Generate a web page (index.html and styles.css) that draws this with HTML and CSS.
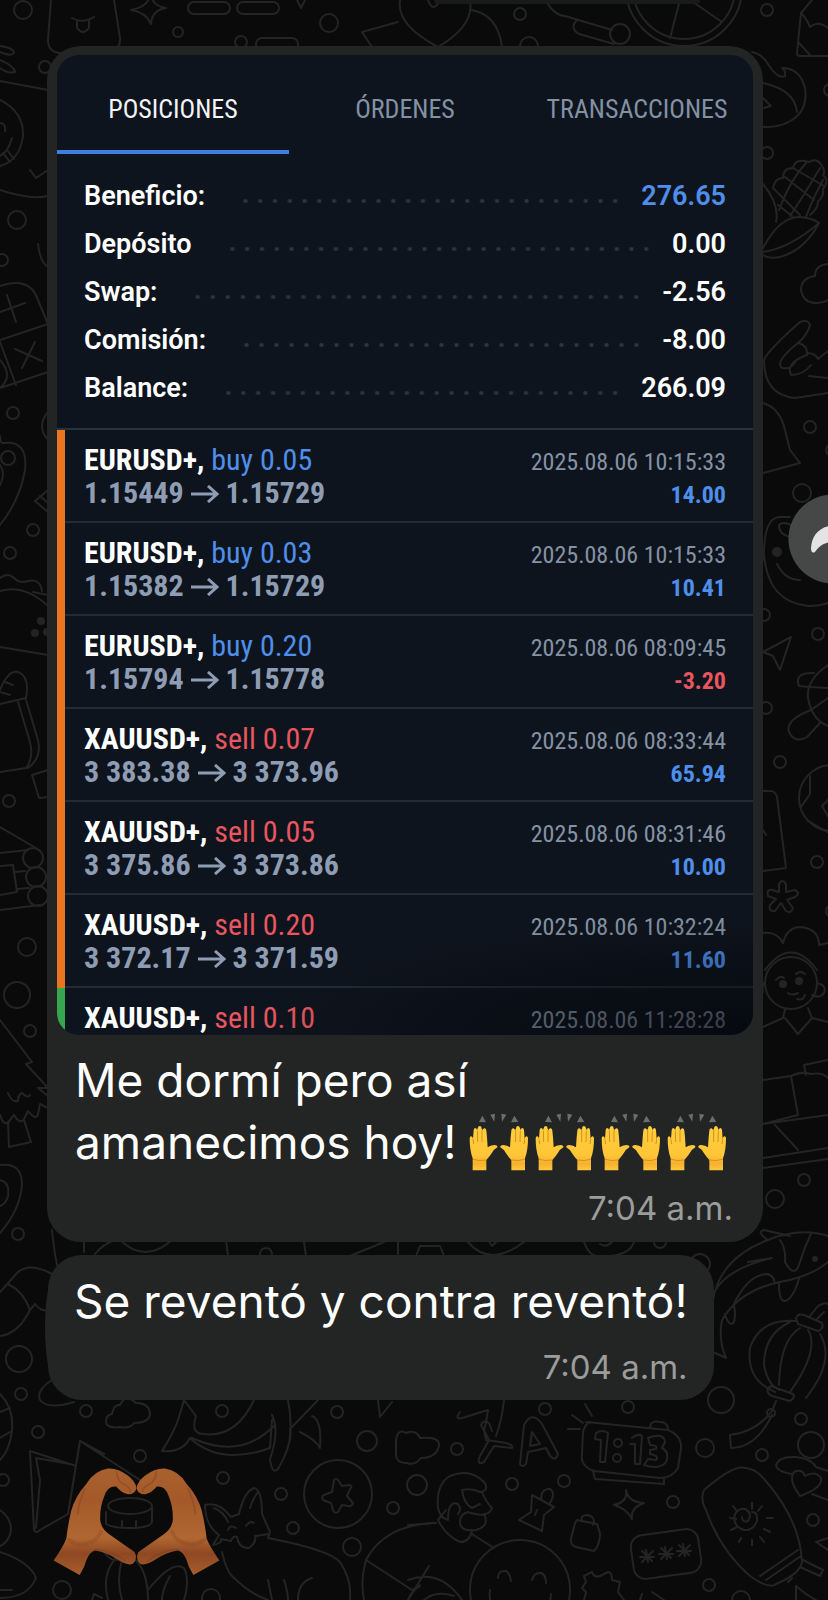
FILE: index.html
```html
<!DOCTYPE html>
<html lang="es">
<head>
<meta charset="utf-8">
<meta name="viewport" content="width=device-width, initial-scale=1">
<title>Chat</title>
<link rel="stylesheet" href="styles.css">
</head>
<body>
<svg class="wallpaper" viewBox="0 0 828 1600" preserveAspectRatio="xMidYMin slice" aria-hidden="true">
  <!-- top edge -->
  <circle cx="23" cy="10" r="9"/><path d="M51 0L48 40Q48 52 60 53H108Q121 50 120 38L114 0M72 18Q82 24 94 17M77 22v6q6 8 12 0v-8"/>
  <path d="M151-6Q152 6 166 8Q152 10 151 24Q146 12 131 10Q148 7 151-6Z"/>
  <rect x="188" y="2" width="42" height="12" rx="6"/><rect x="237" y="2" width="42" height="12" rx="6"/><path d="M297 0l4 8l4-8"/>
  <circle cx="178" cy="32" r="5"/><circle cx="329" cy="23" r="9"/><circle cx="241" cy="42" r="6"/><rect x="256" y="38" width="42" height="14" rx="6"/>
  <path d="M400 0Q396 25 438 47Q475 25 470 0M398 22L362 32L372 47M472 10Q498 15 502 47M428 0q5 14 12 0"/>
  <circle cx="520" cy="14" r="6"/><circle cx="529" cy="46" r="9"/>
  <path d="M545 0Q555 16 565 16L612 30M577 20q-8 8 2 14l35 10"/><circle cx="620" cy="34" r="10"/>
  <circle cx="684" cy="-12" r="58"/><circle cx="684" cy="-12" r="51"/><path d="M680 0L670 38M690 0L722 22"/>
  <circle cx="767" cy="10" r="6"/><path d="M812 0L801 13L797 53q0 3 3 3H828M801 13q6 6 9 14q8-7 18 1M798 42l12 13"/><circle cx="830" cy="90" r="6"/>
  <!-- right edge -->
  <path d="M752 52Q762 54 768 64Q778 80 785 76Q786 70 782 68Q800 68 805 88Q808 110 792 120Q780 128 763 127M763 83Q795 90 797 112M763 98l8 8l-7 2"/>
  <circle cx="767" cy="153" r="6"/>
  <path d="M763 184Q780 205 776 222M763 248Q780 216 800 217Q812 218 819 223Q805 250 780 257Q768 259 763 255M763 252Q790 248 819 223M773 188q2-10 10-10q0-10 10-10q2-10 16-6q8-5 13 4q4 6 1 9q7 6 0 14q1 8-5 12q0 8-8 14M785 177L814 200M793 168L824 186M773 188L800 215M778 205l14 11M806 163Q790 180 779 210M820 168Q804 195 790 216M823 180Q812 200 806 217"/>
  <path d="M828 264q-13 1-13 12q-14 2-14 14q2 13 16 13q6 0 11-3"/>
  <path d="M764 360Q768 350 800 322Q808 319 810 325Q808 334 798 343Q774 362 782 368q10 2 14-8M798 343q10 2 9 12q-22 8-16 20q12 0 20-10M807 353q8 0 11 6l10-8M764 360Q764 395 795 398L828 393M809 376L828 378"/>
  <path d="M763 403Q780 408 785 430L790 450L800 463L763 473"/><circle cx="810" cy="427" r="6"/><circle cx="802" cy="493" r="9"/><circle cx="832" cy="450" r="6"/>
  <path d="M764 560Q763 517 780 517H790M779 525q4-4 12 0v12q-12-2-12-12M777 564Q785 580 800 580M764 555Q768 602 808 606Q820 606 828 603"/><circle class="dot" cx="777" cy="552" r="4"/>
  <circle cx="764" cy="615" r="6"/><circle cx="818" cy="634" r="6"/><path d="M763 652L791 637L780 670L773 656Z"/><circle cx="766" cy="708" r="6"/>
  <path d="M828 665Q806 680 808 698Q812 720 828 726M799 686q-5-14 15-13M799 686q8 1 29 2M811 710q-26 10-22 22q6 12 18 5l14-15M811 710l17-12"/>
  <circle cx="780" cy="762" r="6"/><circle cx="832" cy="798" r="33"/><path d="M810 776v18l-9 13M807 820l20 12M822 806l6 10M822 806l6-6"/>
  <path d="M763 791h8q4 0 6 6L786 868L763 871M763 830l3 5"/><circle cx="817" cy="862" r="6"/>
  <path d="M779 892v-8q3-6 7 0v8l9-2q6 3 0 7l-8 3l6 8q-2 6-7 3l-5-8l-6 8q-7 1-5-6l6-6l-8-3q-2-7 4-6z"/><circle cx="832" cy="911" r="6"/>
  <path d="M763 933q14-2 20 10q4-16 18-16q18 2 18 18l9-2"/><circle cx="791" cy="983" r="26"/><path d="M765 970Q791 935 817 970M776 980q4-5 8-2M796 974q4-4 9 0M788 993q4 3 10 0M797 999q6 2 8-4M765 982q-4 4-2 10M817 983q10 2 7 10q-4 6-12 2M785 1009l-2 9L763 1027M785 1018L798 1034L812 1018L828 1022M808 1008l4 10"/><circle class="dot" cx="783" cy="984" r="3"/><circle class="dot" cx="799" cy="981" r="3"/>
  <path d="M763 1080L791 1076L798 1115L763 1124M791 1076q10-5 20-2q12-2 17 4M828 1060L804 1065l2 10M763 1124L828 1115M775 1125L798 1150M763 1158L828 1148M763 1168l65-9"/>
  <circle cx="804" cy="1180" r="6"/><circle cx="775" cy="1199" r="9"/>
  <!-- fish and lantern -->
  <path d="M713 1300Q720 1258 768 1240Q800 1227 828 1236M768 1240Q756 1232 764 1230L790 1236M780 1240Q786 1248 785 1262Q795 1280 800 1262Q804 1248 811 1234M828 1262Q812 1276 780 1282Q740 1290 722 1320Q718 1340 726 1358L713 1352M713 1296Q722 1270 772 1258L748 1262M733 1306Q748 1274 768 1274Q776 1278 774 1284M725 1314q4 14 9 8q2-8 0-16M779 1284q0 18 6 17q8-2 14-22"/>
  <circle class="dot" cx="815" cy="1259" r="2"/>
  <path d="M796 1321Q760 1318 750 1348Q746 1380 775 1392M790 1322Q764 1334 764 1365Q768 1386 780 1390M800 1328Q780 1340 779 1385M808 1330Q820 1350 790 1392M820 1334Q836 1360 806 1398M796 1318q2-5 8-3l18 8q2 6-4 8l-20-7zM768 1388q-2 5 4 8l18 5q6-4 3-7l-22-8zM776 1401l-4 10Q756 1432 730 1435l1 13Q756 1448 772 1415M810 1316l8-10q6-4 10-2M816 1320l8-8"/><circle cx="771" cy="1413" r="4"/>
  <!-- left edge -->
  <path d="M0 46q14 2 14 7q-3 4-14-1M0 60Q14 66 15 72Q8 74 0 68M0 81L48 90M0 100Q24 112 23 136Q20 160 0 166M0 123q6 0 5 8M12 138Q8 152 0 156M7 150l7 9M3 153l7 9M30 170l6 8l12-8M0 190Q30 200 48 196M38 244Q40 262 48 267"/>
  <circle cx="45" cy="67" r="6"/><circle cx="17" cy="220" r="9"/><circle cx="2" cy="260" r="6"/>
  <path d="M0 286Q30 276 38 300L48 324M0 340L48 324M0 342L16 385M0 388L48 372M7 295l9 27M0 312l25-9M35 342L22 368M15 349l27 12M0 360q14 16 0 28"/>
  <circle cx="13" cy="413" r="6"/><circle cx="8" cy="458" r="7"/><path d="M48 412Q36 426 48 440M0 436Q0 444 4 443Q28 440 25 470Q20 500 0 525M0 465q6 8 0 20M48 490L35 501L48 512M40 496l8 7"/>
  <circle cx="33" cy="530" r="6"/><circle cx="10" cy="553" r="6"/>
  <path d="M0 578q8-6 14 0q6 6 14 3q12-3 14 10M0 591Q24 584 48 606M48 595L33 592M0 647L48 655"/><circle class="dot" cx="41" cy="621" r="3"/><circle class="dot" cx="35" cy="633" r="3"/><circle class="dot" cx="47" cy="632" r="3"/>
  <path d="M0 690Q8 670 18 672Q30 676 26 698L0 704M5 682l8 3M0 692l10 3M18 702L30 742Q34 758 26 768L0 772M26 700L38 740Q42 758 28 768M48 770L32 775L39 798L48 797"/>
  <circle cx="9" cy="801" r="6"/><path d="M0 827L36 848M0 853L28 850M0 866L13 865L17 892L0 895M15 872l10-1M17 889l12-1M0 910L40 905"/><circle cx="33" cy="858" r="10"/><circle cx="36" cy="877" r="10"/><circle cx="38" cy="896" r="10"/>
  <circle cx="27" cy="947" r="9"/><circle cx="17" cy="995" r="13"/><circle cx="30" cy="1031" r="6"/>
  <path d="M0 1020L32 1062L26 1064L48 1088L38 1088L48 1096M8 1093q4 10 10 8q0-6 4-8q6 6 8 2M0 1115q3 10 8 8q4-6 6-8q6 10 10 4l4-8q8 10 10 3l2-10l8 4M8 1122L9 1147L31 1142L24 1120M0 1165Q22 1162 22 1185Q20 1210 0 1233M0 1180q10 2 8 16q-2 8-8 10"/>
  <circle cx="18" cy="1234" r="6"/>
  <!-- gap between messages -->
  <path d="M52 1230Q54 1250 57 1265M84 1240v12M95 1254q8-10 20-14M120 1240Q145 1264 172 1240M226 1240l2 16M304 1242l2 14M350 1256L384 1242M398 1240v16M416 1256l4-10h20l4 10M468 1242Q490 1268 524 1242M488 1240l4 6l6-6M584 1242Q590 1258 600 1256M600 1244q6 4 12-2M610 1256q20-2 24-14"/><circle cx="266" cy="1254" r="6"/><circle cx="660" cy="1242" r="6"/><circle cx="700" cy="1264" r="10"/>
  <!-- below the messages -->
  <path d="M0 1292L18 1272Q30 1262 52 1274M8 1284Q24 1292 30 1310L35 1304q6 8 14 6M30 1310Q18 1334 0 1336M52 1380Q36 1390 40 1400Q48 1410 74 1402M0 1394Q14 1408 12 1430Q10 1450 0 1460M0 1412l10-4M0 1438l10-6"/>
  <circle cx="19" cy="1359" r="13"/><circle cx="21" cy="1394" r="6"/><circle cx="86" cy="1411" r="6"/><circle cx="38" cy="1432" r="6"/><circle cx="140" cy="1456" r="6"/><circle cx="3" cy="1480" r="6"/>
  <path d="M112 1414q2-10 8-9q6-12 16-2q14 0 14 12q-2 8-16 8q-4 6-14 4q-14 2-14-6q0-6 6-7z"/>
  <path d="M76 1466L30 1451L34 1530Q36 1534 40 1530L68 1514M36 1458L40 1480L36 1528M70 1464L36 1458M68 1514L80 1441L140 1480M80 1441L104 1454M106 1512v12q6 4 24 4q20 0 22-6v-15M122 1527v-6M136 1527v-6"/><ellipse cx="130" cy="1506" rx="22" ry="8"/>
  <path d="M0 1552Q30 1562 36 1578Q28 1598 0 1598M0 1510Q14 1520 10 1535Q6 1544 0 1546M0 1590h12M108 1600Q100 1570 122 1552Q148 1560 148 1600M122 1600Q116 1580 122 1560M148 1590Q172 1560 184 1568Q190 1580 184 1600M162 1600q0-10 8-24M104 1552q8 12 18 6M92 1600l2-6l8 4"/><circle cx="62" cy="1590" r="9"/><circle cx="211" cy="1598" r="9"/>
  <path d="M184 1400L196 1416Q190 1434 204 1434Q236 1438 254 1400M184 1400q-4 14-6 20q-4 12-16 31q20 2 28-13Q220 1466 270 1448L272 1420M192 1438Q240 1460 274 1426M272 1415q8 16-2 44q2 16 8 10q14-24 12-40L318 1400M288 1400Q292 1420 290 1440M300 1432Q316 1440 320 1448Q322 1420 312 1416M378 1400L380 1417L392 1402"/>
  <circle cx="222" cy="1411" r="6"/><circle cx="337" cy="1412" r="6"/><circle cx="367" cy="1441" r="10"/><circle cx="223" cy="1478" r="6"/><circle cx="281" cy="1494" r="6"/><circle cx="293" cy="1528" r="6"/><circle cx="393" cy="1508" r="6"/><circle cx="352" cy="1547" r="9"/><circle cx="417" cy="1485" r="10"/>
  <circle cx="338" cy="1494" r="34"/><path d="M334 1480q2-2 4 0l4 6l8-1q3 2 0 4l-3 7l6 7q-1 4-5 3l-6-1l-4 7q-4 2-5-2l-2-7l-8-3q-2-3 1-5l8-3z"/>
  <path d="M205 1505q14-4 26 12l8-3Q244 1492 254 1488Q262 1490 262 1514l8 18l-2 6Q330 1550 340 1562Q352 1580 350 1600M205 1505q0 20 14 30l-6 10q10-2 8-6l10 2q2-6 6-4q2 12 12 11q8-6 6-12l14-2M228 1530q2-6 8-2M246 1526q4-6 8-3M214 1508q10 4 14 14M258 1492q-6 8-8 16M222 1552q4 18 10 24Q250 1594 268 1600M268 1580l4 20M284 1580q4 12 4 20M298 1600q0-18 14-22"/>
  <path d="M396 1440q2-12 10-7q10-4 14 5q20-2 19 8q-3 12-18 12q-6 8-14 5q-12 0-11-10zM366 1560Q384 1526 432 1523M366 1560L412 1590L420 1585M366 1560Q360 1580 364 1600M408 1600q4-10 12-14"/>
  <!-- lettering, clock and pin -->
  <path d="M460 1412q-6 8 2 6L488 1410Q486 1424 484 1430L486 1440L500 1442q14 2 12 6L494 1446L484 1462q-8 4-4-6l9-16l-8-15q2-6 8-2l3 8M504 1400Q502 1420 496 1436M520 1464L524 1425Q532 1410 542 1424L558 1454q-2 8-8 2L546 1448L528 1452L526 1464q-4 4-6 0M532 1432l8 12l-10 2z"/>
  <circle cx="545" cy="1409" r="6"/><circle cx="457" cy="1449" r="6"/><circle cx="512" cy="1484" r="6"/><circle cx="564" cy="1481" r="6"/><circle cx="628" cy="1407" r="6"/><circle cx="673" cy="1502" r="6"/><circle cx="705" cy="1448" r="9"/><circle cx="721" cy="1400" r="13"/>
  <path d="M585 1404l7 12M572 1415l11 8M568 1429h12M586 1422L668 1430Q682 1436 681 1448L678 1468Q672 1478 660 1478L594 1471Q580 1466 582 1454L583 1432Q585 1424 590 1422M593 1471l2 8L664 1484V1478M650 1428q0-8 10-6q8 0 8 8M596 1433q6-4 12 0L605 1462h-5l1-22l-6-1zM632 1438q6-5 10-2L640 1464h-5V1444l-5 0M648 1438q16-6 17 4l-3 6q8 4 4 14q-6 8-22 3l4-6l8 1q4-4-6-6v-4l6-1q2-4-6-4z"/><circle cx="618" cy="1443" r="4"/><circle cx="617" cy="1458" r="4"/>
  <path d="M438 1508Q436 1484 450 1476Q470 1468 484 1482Q490 1490 480 1492Q472 1488 462 1490Q464 1504 472 1508L480 1504M482 1492Q486 1502 492 1508q-2 6-8 6q6 12-8 16q-16 2-16-8q0-8 8-10q12 4 18 2M438 1508Q440 1518 448 1520Q448 1500 458 1504q4 6 0 10M438 1520Q446 1536 460 1542Q470 1542 472 1530M436 1523L408 1525M438 1520L446 1510M472 1534L494 1548"/>
  <circle cx="520" cy="1590" r="50"/><path d="M498 1578q0-8 8-7q4 2 5 10M532 1580q2-8 9-7q5 2 5 10M490 1590q-2 12 6 20M551 1594l-2 16M408 1600l21-34M408 1580Q440 1568 462 1600M424 1600q12-10 30-4"/>
  <path d="M532 1495L554 1507L544 1515L542 1531L519 1520L531 1512ZM541 1500q0-12 9-11q6 4 0 14M537 1510l-2 5M577 1520l20 4l3 9q0 12-6 18l-18-4q-6-2-5-8l4-16zM582 1521q-2-6 6-6q8 2 5 10M626 1490Q628 1502 644 1503Q630 1508 632 1519Q626 1508 614 1505Q628 1502 626 1490Z"/>
  <rect x="632" y="1532" width="68" height="44" rx="12" transform="rotate(-8 666 1554)"/><path d="M646 1550l2 12M640 1557h14M642 1551l10 10M653 1551l-11 11M665 1547l2 12M659 1554h14M661 1548l10 10M672 1548l-11 11M683 1544l2 12M677 1551h14M679 1545l10 10M690 1545l-11 11"/>
  <path d="M584 1576l8-4q2 6 8 4l8-4q4 0 4 8l8 2l-2 10l6 8M584 1576l2 6l-4 6l4 4l-2 8M652 1592l12 8M640 1600l2-6M745 1468Q734 1464 704 1490Q700 1500 706 1510Q720 1550 750 1576Q770 1590 776 1584Q800 1574 802 1562Q800 1520 765 1480Q755 1468 745 1468M760 1576L798 1550M766 1580L801 1556M803 1560l20 10l-3 6l-20-9M788 1582l4-4"/>
  <path d="M752 1512q6 0 5 9q-4 10-13 9q-12-4-9-16q4-6 10-5q8 4 3 12q-6 2-6-4M752 1503v6M762 1506l-4 5M733 1506l4 5M767 1518h6M730 1518l6 1M731 1530l6-3M764 1529l6 3M752 1540v5M760 1537l4 5M741 1538l-2 4"/>
  <circle cx="801" cy="1419" r="6"/><circle cx="811" cy="1445" r="13"/><circle cx="762" cy="1455" r="6"/><circle cx="813" cy="1520" r="6"/><circle cx="709" cy="1585" r="6"/><circle cx="741" cy="1600" r="9"/>
  <path d="M792 1474q-14-2-16-8q2-10 20-9q16 2 20 10l12 4M800 1496q-12-16-6-24q8-4 11 4q10-6 16 2q2 10-21 18M812 1494l16 6M828 1538l-12 4l12 8M796 1600v-14l10 8l10 6"/>
</svg>

<main class="chat">
  <div class="previous"></div>

  <article class="bubble bubble--media">
    <section class="trades" aria-label="Posiciones">
      <nav class="tabs">
        <button class="tab tab--active" type="button">POSICIONES</button>
        <button class="tab" type="button">ÓRDENES</button>
        <button class="tab" type="button">TRANSACCIONES</button>
      </nav>
      <dl class="summary">
        <div class="sum"><dt>Beneficio:</dt><dd class="up">276.65</dd></div>
        <div class="sum"><dt>Depósito</dt><dd>0.00</dd></div>
        <div class="sum"><dt>Swap:</dt><dd>-2.56</dd></div>
        <div class="sum"><dt>Comisión:</dt><dd>-8.00</dd></div>
        <div class="sum"><dt>Balance:</dt><dd>266.09</dd></div>
      </dl>
      <ul class="positions">
        <li class="pos"><div class="line"><span class="name"><b>EURUSD+,</b> <span class="up">buy 0.05</span></span><time>2025.08.06 10:15:33</time></div><div class="line"><span class="price">1.15449 <svg class="arrow" viewBox="0 0 28 18"><path d="M0 9H26M17 1L26 9L17 17"/></svg> 1.15729</span><b class="profit up">14.00</b></div></li>
        <li class="pos"><div class="line"><span class="name"><b>EURUSD+,</b> <span class="up">buy 0.03</span></span><time>2025.08.06 10:15:33</time></div><div class="line"><span class="price">1.15382 <svg class="arrow" viewBox="0 0 28 18"><path d="M0 9H26M17 1L26 9L17 17"/></svg> 1.15729</span><b class="profit up">10.41</b></div></li>
        <li class="pos"><div class="line"><span class="name"><b>EURUSD+,</b> <span class="up">buy 0.20</span></span><time>2025.08.06 08:09:45</time></div><div class="line"><span class="price">1.15794 <svg class="arrow" viewBox="0 0 28 18"><path d="M0 9H26M17 1L26 9L17 17"/></svg> 1.15778</span><b class="profit down">-3.20</b></div></li>
        <li class="pos"><div class="line"><span class="name"><b>XAUUSD+,</b> <span class="down">sell 0.07</span></span><time>2025.08.06 08:33:44</time></div><div class="line"><span class="price">3 383.38 <svg class="arrow" viewBox="0 0 28 18"><path d="M0 9H26M17 1L26 9L17 17"/></svg> 3 373.96</span><b class="profit up">65.94</b></div></li>
        <li class="pos"><div class="line"><span class="name"><b>XAUUSD+,</b> <span class="down">sell 0.05</span></span><time>2025.08.06 08:31:46</time></div><div class="line"><span class="price">3 375.86 <svg class="arrow" viewBox="0 0 28 18"><path d="M0 9H26M17 1L26 9L17 17"/></svg> 3 373.86</span><b class="profit up">10.00</b></div></li>
        <li class="pos"><div class="line"><span class="name"><b>XAUUSD+,</b> <span class="down">sell 0.20</span></span><time>2025.08.06 10:32:24</time></div><div class="line"><span class="price">3 372.17 <svg class="arrow" viewBox="0 0 28 18"><path d="M0 9H26M17 1L26 9L17 17"/></svg> 3 371.59</span><b class="profit up">11.60</b></div></li>
        <li class="pos pos--open"><div class="line"><span class="name"><b>XAUUSD+,</b> <span class="down">sell 0.10</span></span><time>2025.08.06 11:28:28</time></div></li>
      </ul>
    </section>
    <p class="text">Me dormí pero así<br>amanecimos hoy! <span class="emojis" role="img" aria-label="Manos levantadas"><svg viewBox="0 0 180 172"><use href="#raised"/></svg><svg viewBox="0 0 180 172"><use href="#raised"/></svg><svg viewBox="0 0 180 172"><use href="#raised"/></svg><svg viewBox="0 0 180 172"><use href="#raised"/></svg></span></p>
    <time class="stamp">7:04 a.m.</time>
  </article>

  <article class="bubble bubble--tail">
    <p class="text">Se reventó y contra reventó!</p>
    <time class="stamp">7:04 a.m.</time>
  </article>

  <svg class="sticker" viewBox="160 710 502 326" role="img" aria-label="Manos en forma de corazón">
    <defs>
      <linearGradient id="skin" x1="0" y1="0" x2="0" y2="1"><stop offset="0" stop-color="#a9602f"/><stop offset=".3" stop-color="#a5592a"/><stop offset=".65" stop-color="#b06731"/><stop offset=".8" stop-color="#8e4823"/><stop offset="1" stop-color="#a85d2c"/></linearGradient>
      <g id="half">
        <path fill="url(#skin)" d="M162 990L240 1034Q255 1012 262 985Q272 962 288 960Q320 965 350 985Q385 1008 400 1000Q416 985 405 965Q370 940 330 912Q305 895 302 870Q300 830 315 795Q325 765 350 768Q366 788 385 791Q406 792 411 773Q408 752 385 735Q355 712 325 714Q285 720 260 760Q225 800 215 840Q205 880 200 925Q190 950 162 990Z"/>
        <path fill="none" stroke="#7c3c1b" stroke-width="5" stroke-linecap="round" opacity=".4" d="M352 724Q352 750 374 762Q392 770 393 785M256 775Q238 810 234 850M284 958Q330 955 375 990"/>
        <path fill="none" stroke="#7c3c1b" stroke-width="12" stroke-linecap="round" opacity=".25" d="M208 928Q230 948 262 940Q292 932 304 904"/>
      </g>
    </defs>
    <use href="#half"/><use href="#half" transform="translate(822 0) scale(-1 1)"/>
  </svg>
</main>

<button class="forward" type="button" aria-label="Reenviar">
  <svg viewBox="0 0 17 34" aria-hidden="true"><path d="M25 0L43 15L25 29V20C14 19 8 24 4 30Q0 32 0 26C1 13 8 4 25 3Z"/></svg>
</button>

<svg class="symbols" aria-hidden="true">
  <defs>
    <linearGradient id="gold" x1="0" y1="0" x2="0" y2="1"><stop offset="0" stop-color="#ffcf3e"/><stop offset=".65" stop-color="#ffc637"/><stop offset=".85" stop-color="#f6b02f"/><stop offset="1" stop-color="#ffc83a"/></linearGradient>
    <g id="palm">
      <path fill="url(#gold)" d="M2 75Q3 68 7 69Q12 70 12 78L14 50Q15 44 19 44Q24 45 24 51L26 45Q27 38 33 38Q38 39 38 46L41 50Q43 44 47 45Q52 46 52 52L54 72L56 102Q64 96 76 95Q87 96 85 102Q74 108 68 120Q60 132 52 140V171H11V135Q2 112 2 75Z"/>
      <path fill="none" stroke="#d98e1c" stroke-width="3" d="M12 78L14 92M25 52L26 86M39 50L39 86M12 138Q30 144 52 140"/>
    </g>
    <g id="raised">
      <path fill="#6c6d6d" d="M30 26L40 7L51 27ZM64 4L78 1L76 25ZM97 1L112 4L99 25ZM126 27L136 7L148 26Z"/>
      <use href="#palm"/><use href="#palm" transform="translate(179 0) scale(-1 1)"/>
    </g>
  </defs>
</svg>
</body>
</html>
```
FILE: styles.css
```css
* { box-sizing: border-box; }

body {
  margin: 0;
  min-height: 100vh;
  position: relative;
  background: #0a0a0a;
  color: #fff;
  font-family: Inter, "Noto Sans", sans-serif;
}

p, dl, dd, ul { margin: 0; padding: 0; }
ul { list-style: none; }
button { border: 0; padding: 0; font: inherit; color: inherit; background: none; }

.symbols { position: absolute; width: 0; height: 0; }

.wallpaper {
  position: absolute;
  top: 0;
  left: 0;
  width: 100%;
  height: 100%;
  fill: none;
  stroke: #242424;
  stroke-width: 2;
  stroke-linecap: round;
  stroke-linejoin: round;
}
.wallpaper .dot { fill: #242424; }

.chat {
  position: relative;
  padding: 0 65px 22px 47px;
  display: flex;
  flex-direction: column;
  align-items: flex-start;
}

.previous {
  width: 266px;
  height: 4px;
  margin: 0 0 42px 387px;
  background: #191a1a;
  border-radius: 0 0 8px 8px;
}

.bubble {
  position: relative;
  background: #232524;
  border-radius: 34px;
  display: flex;
  flex-direction: column;
}
.bubble--media { align-self: stretch; padding: 9px 10px 12px; }
.bubble--tail { margin: 13px 0 0 1px; padding: 15px 26px 11px; }
.bubble--tail::before {
  content: "";
  position: absolute;
  left: -3px;
  top: 20px;
  bottom: 20px;
  width: 20px;
  border-radius: 50%;
  background: #232524;
}
.bubble--tail > * { position: relative; }

.text { font-size: 46px; line-height: 62px; white-space: nowrap; }
.bubble--media .text { padding: 14px 18px 0; }
.stamp {
  align-self: flex-end;
  color: #9b9c9b;
  font-size: 33px;
  line-height: 44px;
  margin-top: 13px;
}
.bubble--media .stamp { padding-right: 20px; }

.emojis { display: inline-flex; gap: 6px; vertical-align: -12px; }
.emojis svg { width: 60px; height: 58px; }

/* trading app card */
.trades {
  position: relative;
  overflow: hidden;
  border-radius: 22px;
  background: #0e141d;
  font-family: "Roboto Condensed", "Liberation Sans Narrow", Roboto, sans-serif;
}
.trades::after {
  content: "";
  position: absolute;
  inset: 0;
  pointer-events: none;
  background: radial-gradient(ellipse 500px 120px at 100% 100%, rgba(2, 3, 8, .65), rgba(2, 3, 8, 0));
}
.up { color: #4e8fec; }
.down { color: #e9565f; }

.tabs { display: grid; grid-template-columns: repeat(3, 1fr); height: 99px; }
.tab { border-bottom: 4px solid transparent; color: #8391a5; font-size: 26px; padding-top: 12px; }
.tab--active { color: #f2f4f7; border-color: #3f7ddf; }

.summary { padding: 18px 27px 16px; font-family: Roboto, sans-serif; border-bottom: 2px solid #26323c; }
.sum { display: flex; align-items: center; height: 48px; font-size: 27px; font-weight: 600; }
.sum::before {
  content: "";
  order: 1;
  flex: 1;
  height: 4px;
  margin: 10px 18px 0 33px;
  background: radial-gradient(circle, #2b3743 1px, transparent 3px) 0 0 / 15px 4px round;
}
.sum dd { order: 2; }

.pos { height: 93px; border-left: 8px solid #e8751f; padding: 13px 27px 0 19px; box-shadow: inset 0 -2px #212c36; }
.pos--open { height: 47px; border-color: #36a64f; box-shadow: none; }
.line { display: flex; justify-content: space-between; align-items: baseline; height: 33px; line-height: 33px; white-space: nowrap; }
.name, .price { font-size: 30px; }
.price { color: #8e9db3; font-weight: 700; }
.trades time { font-size: 24px; color: #8592a4; }
.profit { font-size: 24px; }
.arrow { width: 28px; height: 18px; fill: none; stroke: #8e9db3; stroke-width: 3; }

.sticker { width: 167px; height: 109px; margin: 67px 0 0 6px; }

.forward {
  position: absolute;
  top: 494px;
  right: 0;
  width: 40px;
  height: 90px;
  padding-left: 23px;
  background: radial-gradient(circle at 45px 45px, #464848 44px, transparent 45px);
  display: flex;
  align-items: center;
}
.forward svg { width: 17px; height: 34px; fill: #e4e4e4; }
```
